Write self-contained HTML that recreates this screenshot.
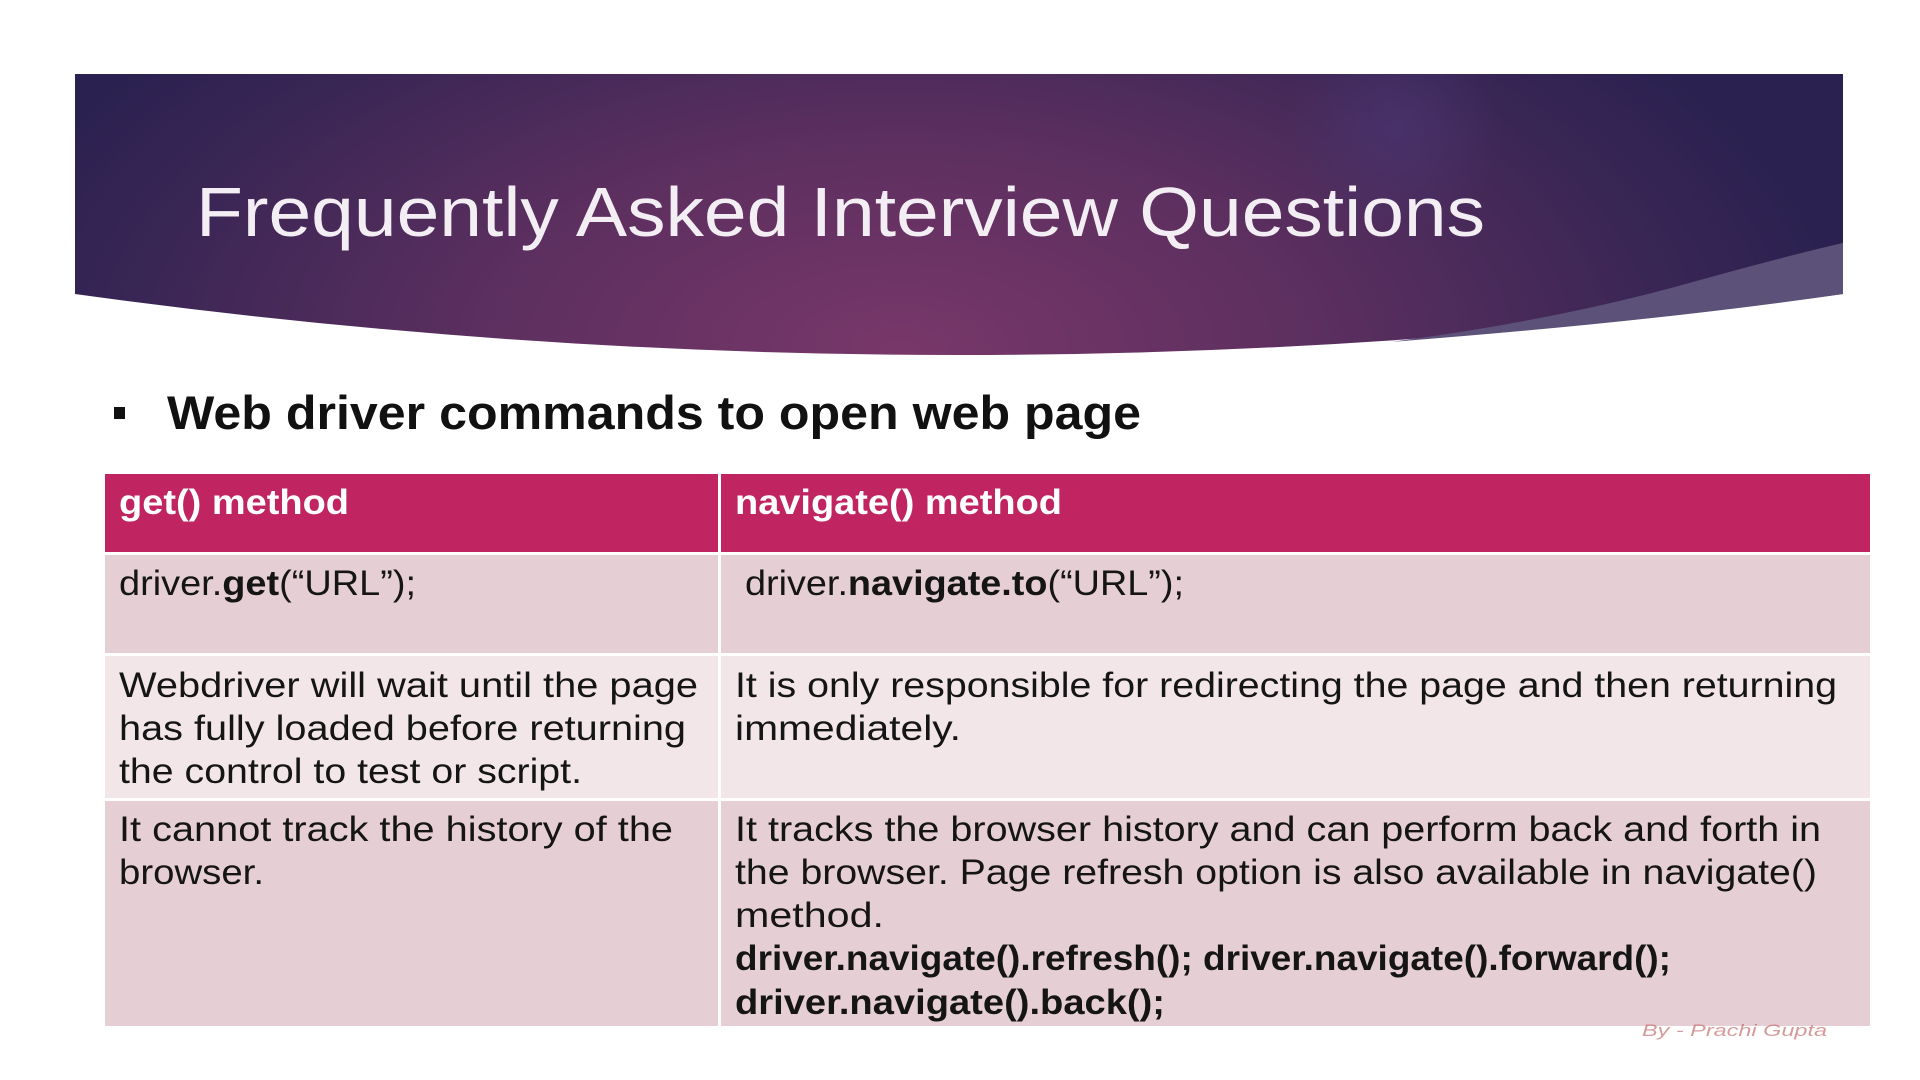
<!DOCTYPE html>
<html><head><meta charset="utf-8"><style>
html,body{margin:0;padding:0;background:#fff;width:1920px;height:1080px;overflow:hidden}
svg{display:block}
text{font-family:"Liberation Sans",sans-serif}
</style></head><body>
<svg width="1920" height="1080" viewBox="0 0 1920 1080" xmlns="http://www.w3.org/2000/svg">
<defs>
<radialGradient id="g1" cx="0" cy="0" r="1" gradientUnits="userSpaceOnUse" gradientTransform="translate(900 350) scale(950 480)">
<stop offset="0" stop-color="#783769"/>
<stop offset="0.45" stop-color="#5b2f5f"/>
<stop offset="0.8" stop-color="#3a2655"/>
<stop offset="1" stop-color="#2a2150"/>
</radialGradient>
<radialGradient id="g2" cx="1395" cy="130" r="110" gradientUnits="userSpaceOnUse">
<stop offset="0" stop-color="#4a3570" stop-opacity="0.7"/>
<stop offset="1" stop-color="#4a3570" stop-opacity="0"/>
</radialGradient>
</defs>
<path d="M75 74 H1843 V294 Q959 416 75 294 Z" fill="url(#g1)"/>
<path d="M75 74 H1843 V294 Q959 416 75 294 Z" fill="url(#g2)"/>
<path d="M1843 243 V294 Q1650 322 1390 342 Q1560 320 1700 280 Q1790 255 1843 243 Z" fill="#5c5178"/>
<text x="196" y="236" font-size="70" fill="#f3eef4" textLength="1289" lengthAdjust="spacingAndGlyphs">Frequently Asked Interview Questions</text>

<rect x="114" y="407" width="11" height="12" fill="#111"/>
<text x="167" y="429" font-size="47" font-weight="bold" fill="#111" textLength="974" lengthAdjust="spacingAndGlyphs">Web driver commands to open web page</text>

<rect x="105" y="474" width="1765" height="78" fill="#c02562"/>
<rect x="105" y="555" width="1765" height="98" fill="#e6cfd4"/>
<rect x="105" y="656" width="1765" height="142" fill="#f2e6e9"/>
<rect x="105" y="801" width="1765" height="225" fill="#e6cfd4"/>
<rect x="718" y="474" width="3" height="552" fill="#fff"/>

<g font-size="35" fill="#151515">
<text x="119" y="514" font-weight="bold" fill="#fff" textLength="230" lengthAdjust="spacingAndGlyphs">get() method</text>
<text x="735" y="514" font-weight="bold" fill="#fff" textLength="327" lengthAdjust="spacingAndGlyphs">navigate() method</text>
<text x="119" y="595" textLength="297" lengthAdjust="spacingAndGlyphs">driver.<tspan font-weight="bold">get</tspan>(“URL”);</text>
<text x="745" y="595" textLength="439" lengthAdjust="spacingAndGlyphs">driver.<tspan font-weight="bold">navigate.to</tspan>(“URL”);</text>
<text x="119" y="697" textLength="579" lengthAdjust="spacingAndGlyphs">Webdriver will wait until the page</text>
<text x="119" y="740" textLength="567" lengthAdjust="spacingAndGlyphs">has fully loaded before returning</text>
<text x="119" y="783" textLength="463" lengthAdjust="spacingAndGlyphs">the control to test or script.</text>
<text x="735" y="697" textLength="1102" lengthAdjust="spacingAndGlyphs">It is only responsible for redirecting the page and then returning</text>
<text x="735" y="740" textLength="226" lengthAdjust="spacingAndGlyphs">immediately.</text>
<text x="119" y="841" textLength="554" lengthAdjust="spacingAndGlyphs">It cannot track the history of the</text>
<text x="119" y="884" textLength="145" lengthAdjust="spacingAndGlyphs">browser.</text>
<text x="735" y="841" textLength="1086" lengthAdjust="spacingAndGlyphs">It tracks the browser history and can perform back and forth in</text>
<text x="735" y="884" textLength="1082" lengthAdjust="spacingAndGlyphs">the browser. Page refresh option is also available in navigate()</text>
<text x="735" y="927" textLength="149" lengthAdjust="spacingAndGlyphs">method.</text>
<text x="735" y="970" font-weight="bold" textLength="936" lengthAdjust="spacingAndGlyphs">driver.navigate().refresh(); driver.navigate().forward();</text>
<text x="735" y="1014" font-weight="bold" textLength="430" lengthAdjust="spacingAndGlyphs">driver.navigate().back();</text>
</g>
<text x="1642" y="1036" font-size="17" font-style="italic" fill="#b44a4a" opacity="0.55" textLength="185" lengthAdjust="spacingAndGlyphs">By - Prachi Gupta</text>
</svg>
</body></html>
